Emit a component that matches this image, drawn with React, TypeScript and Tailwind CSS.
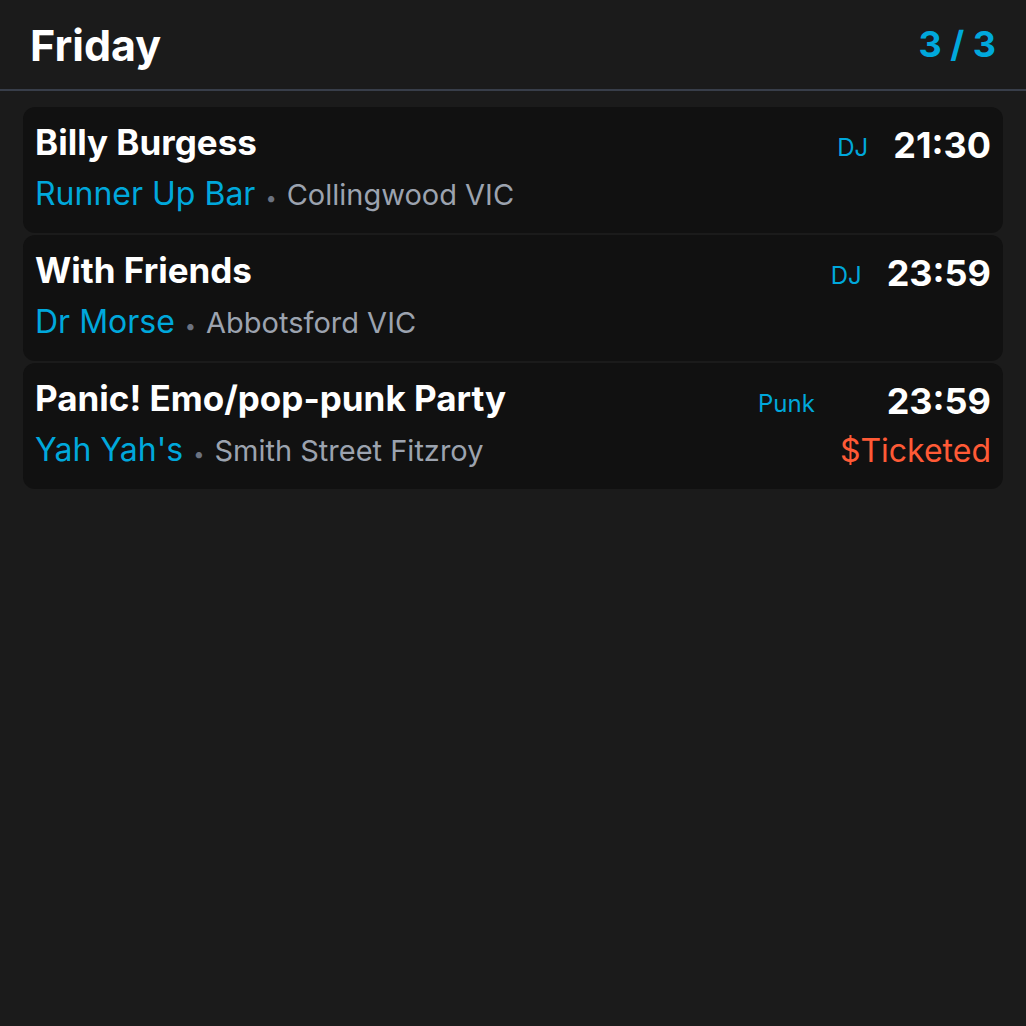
import React from "react";

type Gig = {
  title: string;
  venue: string;
  place: string;
  tag: string;
  time: string;
  ticketed?: boolean;
};

const gigs: Gig[] = [
  { title: "Billy Burgess", venue: "Runner Up Bar", place: "Collingwood VIC", tag: "DJ", time: "21:30" },
  { title: "With Friends", venue: "Dr Morse", place: "Abbotsford VIC", tag: "DJ", time: "23:59" },
  { title: "Panic! Emo/pop-punk Party", venue: "Yah Yah's", place: "Smith Street Fitzroy", tag: "Punk", time: "23:59", ticketed: true },
];

const GigCard: React.FC<{ gig: Gig }> = ({ gig }) => {
  return (
    <div className="flex rounded-xl bg-[#111111] pl-3 pr-3 pt-[15px] pb-[17px]">
      <div className="min-w-0 flex-1">
        <div className="text-[35px] font-bold leading-[40px] text-white">{gig.title}</div>
        <div className="mt-[14px] flex items-baseline leading-[36px] whitespace-nowrap">
          <span className="text-[32px] text-[#00a8dc]">{gig.venue}</span>
          <span className="mx-[10px] text-[20px] text-[#6b7280]">•</span>
          <span className="text-[29px] text-[#9ca3af]">{gig.place}</span>
        </div>
      </div>
      <div className="mr-[25px] mt-[10px] text-[24px] leading-[32px] text-[#00a8dc]">{gig.tag}</div>
      <div className="flex flex-col items-end">
        <div className="mt-[3px] text-[36px] font-bold leading-[40px] text-white">{gig.time}</div>
        {gig.ticketed && (
          <div className="mt-[12px] text-[32px] leading-[36px] text-[#ff5a36]">$Ticketed</div>
        )}
      </div>
    </div>
  );
};

export default function App() {
  return (
    <div className="min-h-[1026px] bg-[#1b1b1b] font-['Inter',sans-serif]">
      <div className="flex h-[91px] items-center justify-between border-b-2 border-[#383e4a] pl-[30px] pr-[30px]">
        <div className="mt-[2px] text-[43px] font-bold text-white">Friday</div>
        <div className="-mt-[1px] text-[36px] font-bold text-[#00a8dc]">3 / 3</div>
      </div>
      <div className="mx-[23px] mt-4 flex flex-col gap-[2px]">
        {gigs.map((g) => (
          <GigCard key={g.title} gig={g} />
        ))}
      </div>
    </div>
  );
}
